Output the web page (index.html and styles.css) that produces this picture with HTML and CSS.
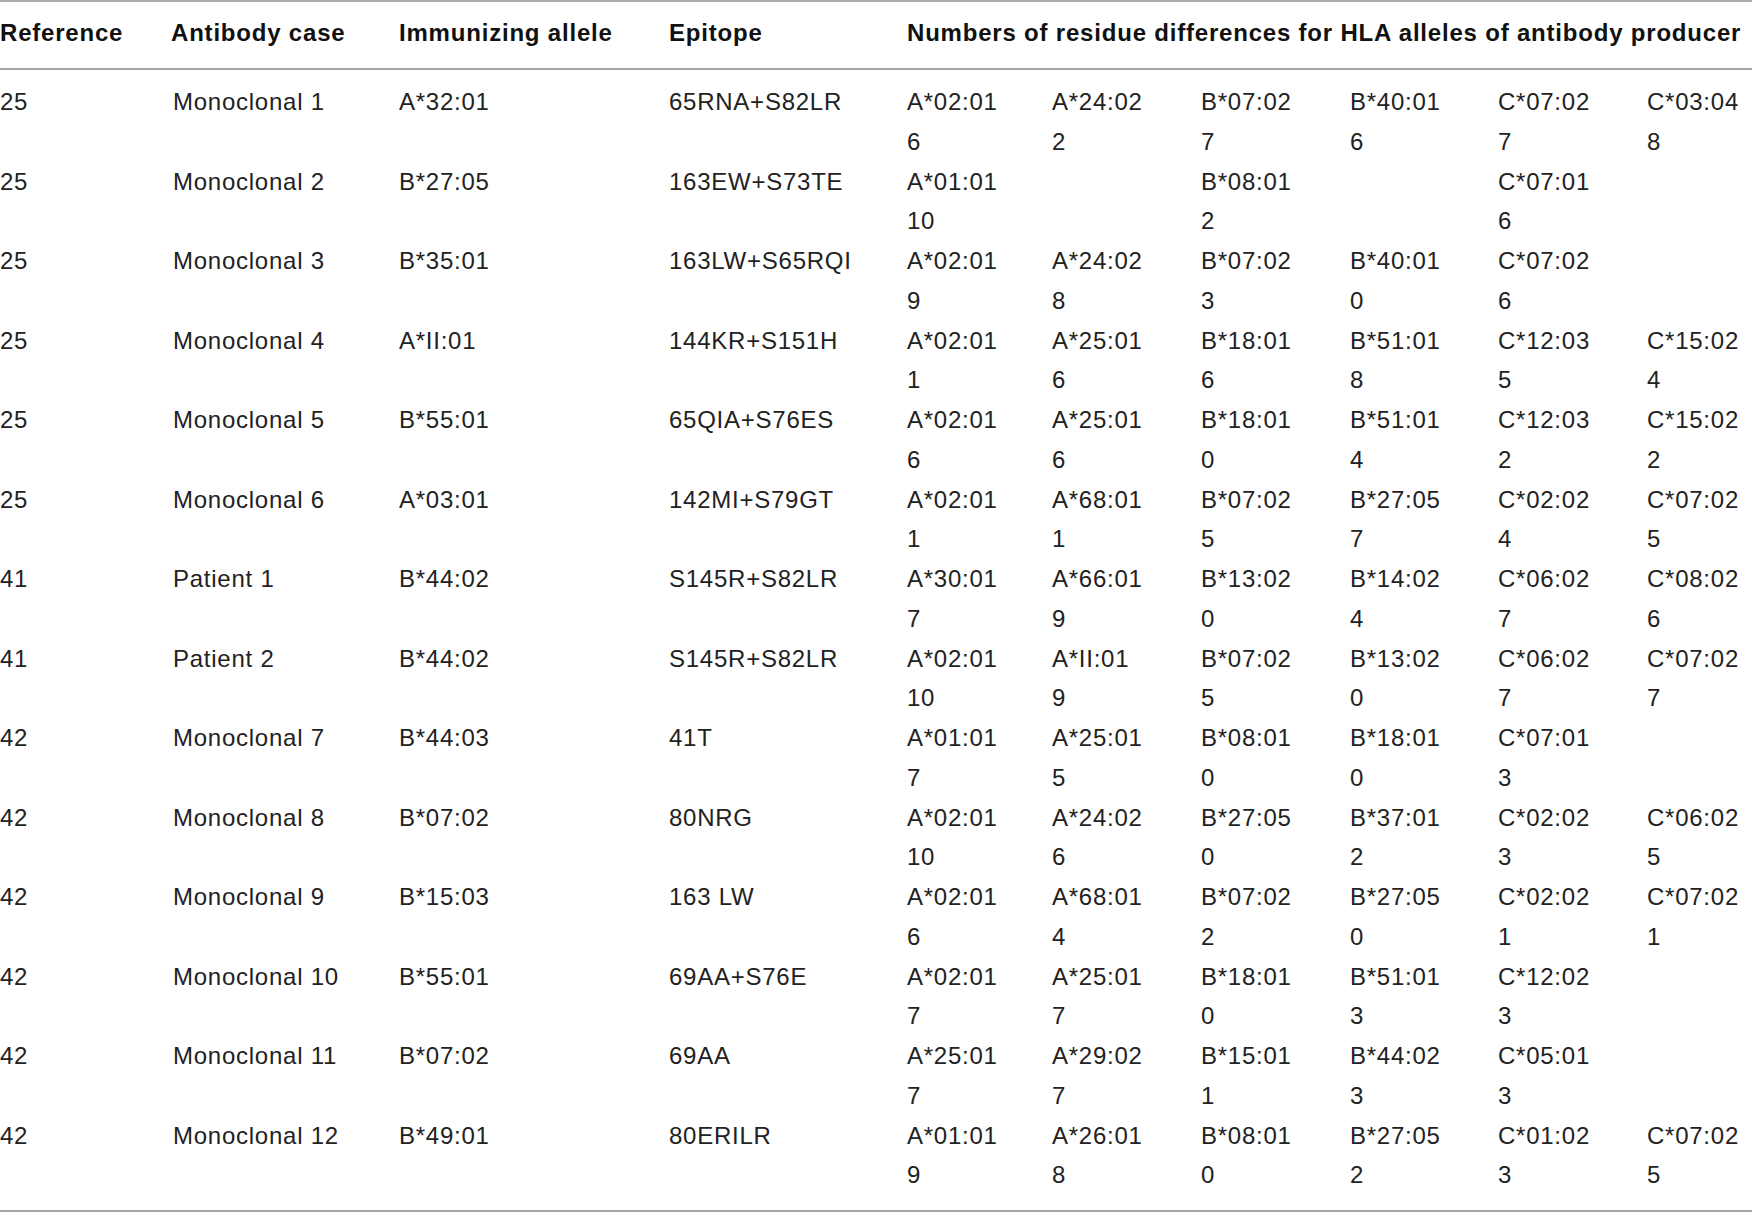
FILE: index.html
```html
<!DOCTYPE html>
<html>
<head>
<meta charset="utf-8">
<link rel="stylesheet" href="styles.css">
</head>
<body>
<table class="hla">
  <colgroup>
    <col class="c-ref"><col class="c-case"><col class="c-imm"><col class="c-epi">
    <col class="c-a1"><col class="c-a2"><col class="c-b1"><col class="c-b2"><col class="c-c1"><col class="c-c2">
  </colgroup>
  <thead>
    <tr>
      <th>Reference</th>
      <th>Antibody case</th>
      <th>Immunizing allele</th>
      <th>Epitope</th>
      <th colspan="6">Numbers of residue differences for HLA alleles of antibody producer</th>
    </tr>
  </thead>
  <tbody id="rows">
    <tr><td>25</td><td class="lt">Monoclonal 1</td><td>A*32:01</td><td>65RNA+S82LR</td><td>A*02:01<br>6</td><td>A*24:02<br>2</td><td>B*07:02<br>7</td><td>B*40:01<br>6</td><td>C*07:02<br>7</td><td>C*03:04<br>8</td></tr>
    <tr><td>25</td><td class="lt">Monoclonal 2</td><td>B*27:05</td><td>163EW+S73TE</td><td>A*01:01<br>10</td><td></td><td>B*08:01<br>2</td><td></td><td>C*07:01<br>6</td><td></td></tr>
    <tr><td>25</td><td class="lt">Monoclonal 3</td><td>B*35:01</td><td>163LW+S65RQI</td><td>A*02:01<br>9</td><td>A*24:02<br>8</td><td>B*07:02<br>3</td><td>B*40:01<br>0</td><td>C*07:02<br>6</td><td></td></tr>
    <tr><td>25</td><td class="lt">Monoclonal 4</td><td>A*II:01</td><td>144KR+S151H</td><td>A*02:01<br>1</td><td>A*25:01<br>6</td><td>B*18:01<br>6</td><td>B*51:01<br>8</td><td>C*12:03<br>5</td><td>C*15:02<br>4</td></tr>
    <tr><td>25</td><td class="lt">Monoclonal 5</td><td>B*55:01</td><td>65QIA+S76ES</td><td>A*02:01<br>6</td><td>A*25:01<br>6</td><td>B*18:01<br>0</td><td>B*51:01<br>4</td><td>C*12:03<br>2</td><td>C*15:02<br>2</td></tr>
    <tr><td>25</td><td class="lt">Monoclonal 6</td><td>A*03:01</td><td>142MI+S79GT</td><td>A*02:01<br>1</td><td>A*68:01<br>1</td><td>B*07:02<br>5</td><td>B*27:05<br>7</td><td>C*02:02<br>4</td><td>C*07:02<br>5</td></tr>
    <tr><td>41</td><td class="lt">Patient 1</td><td>B*44:02</td><td>S145R+S82LR</td><td>A*30:01<br>7</td><td>A*66:01<br>9</td><td>B*13:02<br>0</td><td>B*14:02<br>4</td><td>C*06:02<br>7</td><td>C*08:02<br>6</td></tr>
    <tr><td>41</td><td class="lt">Patient 2</td><td>B*44:02</td><td>S145R+S82LR</td><td>A*02:01<br>10</td><td>A*II:01<br>9</td><td>B*07:02<br>5</td><td>B*13:02<br>0</td><td>C*06:02<br>7</td><td>C*07:02<br>7</td></tr>
    <tr><td>42</td><td class="lt">Monoclonal 7</td><td>B*44:03</td><td>41T</td><td>A*01:01<br>7</td><td>A*25:01<br>5</td><td>B*08:01<br>0</td><td>B*18:01<br>0</td><td>C*07:01<br>3</td><td></td></tr>
    <tr><td>42</td><td class="lt">Monoclonal 8</td><td>B*07:02</td><td>80NRG</td><td>A*02:01<br>10</td><td>A*24:02<br>6</td><td>B*27:05<br>0</td><td>B*37:01<br>2</td><td>C*02:02<br>3</td><td>C*06:02<br>5</td></tr>
    <tr><td>42</td><td class="lt">Monoclonal 9</td><td>B*15:03</td><td>163 LW</td><td>A*02:01<br>6</td><td>A*68:01<br>4</td><td>B*07:02<br>2</td><td>B*27:05<br>0</td><td>C*02:02<br>1</td><td>C*07:02<br>1</td></tr>
    <tr><td>42</td><td class="lt">Monoclonal 10</td><td>B*55:01</td><td>69AA+S76E</td><td>A*02:01<br>7</td><td>A*25:01<br>7</td><td>B*18:01<br>0</td><td>B*51:01<br>3</td><td>C*12:02<br>3</td><td></td></tr>
    <tr><td>42</td><td class="lt">Monoclonal 11</td><td>B*07:02</td><td>69AA</td><td>A*25:01<br>7</td><td>A*29:02<br>7</td><td>B*15:01<br>1</td><td>B*44:02<br>3</td><td>C*05:01<br>3</td><td></td></tr>
    <tr><td>42</td><td class="lt">Monoclonal 12</td><td>B*49:01</td><td>80ERILR</td><td>A*01:01<br>9</td><td>A*26:01<br>8</td><td>B*08:01<br>0</td><td>B*27:05<br>2</td><td>C*01:02<br>3</td><td>C*07:02<br>5</td></tr>
  </tbody>
</table>
</body>
</html>
```

FILE: styles.css
```css
html, body {
  margin: 0;
  padding: 0;
  background: #ffffff;
}

.hla {
  width: 1752px;
  table-layout: fixed;
  border-collapse: collapse;
  border-spacing: 0;
  font-family: "Liberation Sans", Arial, sans-serif;
  color: #222;
  border-top: 2px solid #ababab;
  border-bottom: 2px solid #a6a6a6;
}

.c-ref { width: 171px; }
.c-case { width: 228px; }
.c-imm { width: 270px; }
.c-epi { width: 238px; }
.c-a1 { width: 145px; }
.c-a2 { width: 149px; }
.c-b1 { width: 149px; }
.c-b2 { width: 148px; }
.c-c1 { width: 149px; }
.c-c2 { width: 105px; }

.hla th {
  font-weight: bold;
  font-size: 24px;
  line-height: 40px;
  letter-spacing: 0.8px;
  text-align: left;
  white-space: nowrap;
  padding: 11px 0 15px 0;
  color: #111;
  border-bottom: 2px solid #a3a3a3;
}

.hla td {
  font-size: 24px;
  line-height: 39.75px;
  vertical-align: top;
  padding: 0;
  white-space: nowrap;
  letter-spacing: 0.75px;
}

.hla td.lt {
  padding-left: 2px;
}

.hla tbody tr:first-child td {
  padding-top: 12px;
}

.hla tbody tr:last-child td {
  padding-bottom: 15px;
}
```
